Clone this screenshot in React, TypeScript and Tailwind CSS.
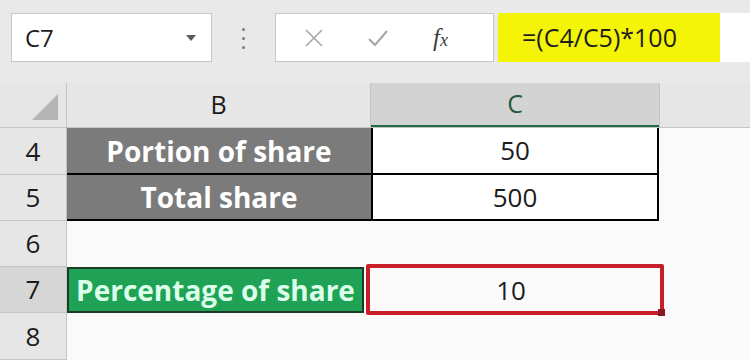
import React from "react";

const ROWS = [
  { n: "4", h: "h-[47px]" },
  { n: "5", h: "h-[46px]" },
  { n: "6", h: "h-[46px]" },
  { n: "7", h: "h-[46px]" },
  { n: "8", h: "h-[47px]" },
];

function RowHead({ n, active }: { n: string; active?: boolean }) {
  return (
    <div
      className={`flex w-[67px] shrink-0 items-center justify-center border-r border-b border-[#c4c4c4] text-[26px] text-[#1b1b1b] ${
        active ? "bg-[#d6d6d6]" : "bg-[#e6e6e6]"
      }`}
    >
      {n}
    </div>
  );
}

export default function App() {
  const font = { fontFamily: '"Open Sans", "Noto Sans", sans-serif' };
  return (
    <div className="h-[360px] w-[750px] overflow-hidden bg-[#fafafa]" style={font}>
      {/* formula bar */}
      <div className="flex h-[83px] items-start bg-[#e9e9e9] pt-[13px]">
        <div className="ml-[11px] flex h-[49px] w-[201px] items-center justify-between border border-[#c6c6c6] bg-white pl-[13px] pr-[14px]">
          <span className="text-[24px] text-[#1e1e1e]">C7</span>
          <svg width="12" height="8" viewBox="0 0 12 8">
            <path d="M1 1h10L6 7z" fill="#5a5a5a" />
          </svg>
        </div>
        <div className="flex w-[63px] flex-col items-center gap-[6px] pt-[15px]">
          <span className="h-[3px] w-[3px] rounded-full bg-[#7a7a7a]" />
          <span className="h-[3px] w-[3px] rounded-full bg-[#7a7a7a]" />
          <span className="h-[3px] w-[3px] rounded-full bg-[#7a7a7a]" />
        </div>
        <div className="flex h-[49px] w-[219px] items-center border border-[#c6c6c6] bg-white">
          <svg className="ml-[27px]" width="22" height="22" viewBox="0 0 22 22">
            <path d="M3 3l16 16M19 3L3 19" stroke="#a6a6a6" strokeWidth="1.6" />
          </svg>
          <svg className="ml-[42px]" width="22" height="20" viewBox="0 0 22 20">
            <path d="M2 11l6 6L20 3" stroke="#a6a6a6" strokeWidth="2" fill="none" />
          </svg>
          <span
            className="ml-[44px] text-[25px] italic text-[#3c3c3c]"
            style={{ fontFamily: '"Liberation Serif", serif' }}
          >
            f<span className="text-[18px]">x</span>
          </span>
        </div>
        <div className="ml-[4px] flex h-[49px] flex-1 items-center bg-white">
          <div className="flex h-full w-[222px] items-center bg-[#f4f407] pl-[24px] text-[25px] text-[#1e1e1e]">
            =(C4/C5)*100
          </div>
        </div>
      </div>

      {/* column header */}
      <div className="flex h-[45px] border-b border-[#c4c4c4] bg-[#e6e6e6]">
        <div className="flex w-[67px] shrink-0 items-end justify-end border-r border-[#c4c4c4] pb-[5px] pr-[6px]">
          <svg width="30" height="30" viewBox="0 0 30 30">
            <path d="M28 2V28H2z" fill="#b4b4b4" />
          </svg>
        </div>
        <div className="flex w-[304px] shrink-0 items-center justify-center border-r border-[#c4c4c4] text-[25px] text-[#1b1b1b]">
          B
        </div>
        <div className="flex w-[288px] shrink-0 items-center justify-center border-b-2 border-b-[#1f6b45] bg-[#d3d3d3] text-[25px] text-[#245a3e]">
          C
        </div>
        <div className="flex-1 border-l border-[#c4c4c4]" />
      </div>

      {/* rows */}
      <div className="relative">
        {/* row 4 */}
        <div className={`flex ${ROWS[0].h}`}>
          <RowHead n="4" />
          <div className="flex w-[304px] shrink-0 items-center justify-center border-b-2 border-black bg-[#7b7b7b] text-[28px] font-bold text-white">
            Portion of share
          </div>
          <div className="flex w-[288px] shrink-0 items-center justify-center border-x-2 border-b-2 border-black bg-white text-[26px] text-[#1b1b1b]">
            50
          </div>
        </div>
        {/* row 5 */}
        <div className={`flex ${ROWS[1].h}`}>
          <RowHead n="5" />
          <div className="flex w-[304px] shrink-0 items-center justify-center border-b-2 border-black bg-[#7b7b7b] text-[28px] font-bold text-white">
            Total share
          </div>
          <div className="flex w-[288px] shrink-0 items-center justify-center border-x-2 border-b-2 border-black bg-white text-[26px] text-[#1b1b1b]">
            500
          </div>
        </div>
        {/* row 6 */}
        <div className={`flex ${ROWS[2].h}`}>
          <RowHead n="6" />
        </div>
        {/* row 7 */}
        <div className={`flex ${ROWS[3].h}`}>
          <RowHead n="7" active />
          <div className="flex w-[297px] shrink-0 items-center justify-center border-2 border-[#1b3b26] bg-[#1fa255] text-[28px] font-bold text-[#dcffe9]">
            Percentage of share
          </div>
          <div className="flex w-[294px] shrink-0 items-center justify-center text-[26px] text-[#1b1b1b]">
            10
          </div>
        </div>
        {/* row 8 */}
        <div className={`flex ${ROWS[4].h}`}>
          <RowHead n="8" />
        </div>

        {/* selection box */}
        <div className="pointer-events-none absolute left-[366px] top-[136px] h-[51px] w-[298px] rounded-[2px] border-[4px] border-[#c81e2a]">
          <span className="absolute -bottom-[5px] -right-[5px] h-[7px] w-[7px] bg-[#8a1820]" />
        </div>
      </div>
    </div>
  );
}
